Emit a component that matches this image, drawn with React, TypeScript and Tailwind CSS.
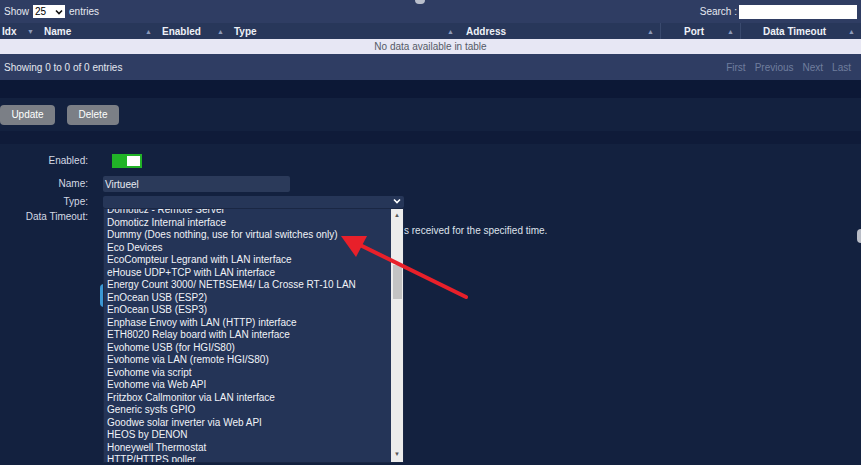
const hardwareTypes = [
  "Domoticz - Remote Server",
  "Domoticz Internal interface",
  "Dummy (Does nothing, use for virtual switches only)",
  "Eco Devices",
  "EcoCompteur Legrand with LAN interface",
  "eHouse UDP+TCP with LAN interface",
  "Energy Count 3000/ NETBSEM4/ La Crosse RT-10 LAN",
  "EnOcean USB (ESP2)",
  "EnOcean USB (ESP3)",
  "Enphase Envoy with LAN (HTTP) interface",
  "ETH8020 Relay board with LAN interface",
  "Evohome USB (for HGI/S80)",
  "Evohome via LAN (remote HGI/S80)",
  "Evohome via script",
  "Evohome via Web API",
  "Fritzbox Callmonitor via LAN interface",
  "Generic sysfs GPIO",
  "Goodwe solar inverter via Web API",
  "HEOS by DENON",
  "Honeywell Thermostat",
  "HTTP/HTTPS poller",
];

const SortIcon = ({ down = false }: any) => (
  <span className="text-[7px] text-[#8d9bbb] leading-none">{down ? "▼" : "▲"}</span>
);

const Chevron = ({ color = "#fff" }: any) => (
  <svg width="8" height="6" viewBox="0 0 8 6">
    <path d="M1 1.5 L4 4.5 L7 1.5" fill="none" stroke={color} strokeWidth="1.6" />
  </svg>
);

const HeaderCell = ({ title, width, pad = "pl-[2px]", center = false, down = false, border = false }: any) => {
  return (
    <div
      className={`${width} h-full flex items-center justify-between pr-[6px] ${
        border ? "border-l border-[#3a4a6e]" : ""
      }`}
    >
      <span className={`${center ? "flex-1 text-center" : pad}`}>{title}</span>
      <SortIcon down={down} />
    </div>
  );
};

const FormRow = ({ label, className = "", children }: any) => {
  return (
    <div className={`flex items-center ${className}`}>
      <div className="w-[88px] text-right text-[10px] leading-[12px] text-[#d4d9e4]">{label}</div>
      {children}
    </div>
  );
};

export default function App() {
  return (
    <div
      className="relative w-[861px] h-[465px] overflow-hidden bg-[#13213f] text-white"
      style={{ fontFamily: '"Liberation Sans", Arial, sans-serif' }}
    >
      {/* table panel */}
      <div className="h-[80px] bg-[#2f3d63] flex flex-col">
        <div className="h-[23px] flex items-center justify-between px-[4px] text-[10px] text-[#e6e9f0]">
          <div className="flex items-center gap-[4px]">
            <span>Show</span>
            <div className="w-[32px] h-[13px] bg-white text-black flex items-center justify-between px-[2px] text-[10px]">
              <span>25</span>
              <Chevron color="#111" />
            </div>
            <span>entries</span>
          </div>
          <div className="flex items-center gap-[2px]">
            <span>Search :</span>
            <div className="w-[118px] h-[14px] bg-white" />
          </div>
        </div>
        <div className="h-[16px] bg-[#28375a] flex items-center text-[10px] font-bold text-[#eef1f7]">
          <HeaderCell title="Idx" width="w-[40px]" down />
          <HeaderCell title="Name" width="w-[118px]" pad="pl-[4px]" />
          <HeaderCell title="Enabled" width="w-[72px]" pad="pl-[4px]" />
          <HeaderCell title="Type" width="w-[230px]" pad="pl-[4px]" />
          <HeaderCell title="Address" width="w-[200px]" pad="pl-[6px]" />
          <HeaderCell title="Port" width="w-[80px]" center border />
          <HeaderCell title="Data Timeout" width="flex-1" center border />
        </div>
        <div className="h-[15px] bg-[#e7e7f4] flex items-center justify-center text-[10px] text-[#555a66]">
          No data available in table
        </div>
        <div className="flex-1 flex items-center justify-between px-[4px] text-[10px]">
          <span className="text-[#e3e7ef]">Showing 0 to 0 of 0 entries</span>
          <div className="flex gap-[9px] pr-[6px] text-[#6f7d9e]">
            <span>First</span>
            <span>Previous</span>
            <span>Next</span>
            <span>Last</span>
          </div>
        </div>
      </div>

      <div className="h-[18px] bg-[#0c1836]" />
      <div className="h-[33px] bg-[#13213f] flex items-center gap-[12px]">
        <button className="w-[55px] h-[20px] rounded-[4px] bg-[#7b7f86] text-[10px] text-white">
          Update
        </button>
        <button className="w-[52px] h-[20px] rounded-[4px] bg-[#7b7f86] text-[10px] text-white">
          Delete
        </button>
      </div>
      <div className="h-[13px] bg-[#0f1b39]" />

      {/* form */}
      <div className="bg-[#13213f] pt-[10px]">
        <FormRow label="Enabled:">
          <div className="ml-[24px] w-[30px] h-[14px] bg-[#21b327] flex items-center justify-end pr-[2px]">
            <div className="w-[13px] h-[10px] bg-white" />
          </div>
        </FormRow>
        <FormRow label="Name:" className="mt-[8px]">
          <div className="ml-[15px] w-[187px] h-[16px] bg-[#2b3a5a] rounded-[2px] flex items-center px-[2px] text-[10px] text-[#e8ebf2]">
            Virtueel
          </div>
        </FormRow>
        <FormRow label="Type:" className="mt-[4px]">
          <div className="ml-[15px] w-[301px] h-[12px] bg-[#263658] rounded-[2px] flex items-start justify-end pr-[3px] pt-[2px]">
            <Chevron />
          </div>
        </FormRow>
        <FormRow label="Data Timeout:" className="mt-[3px]">
          <div className="ml-[15px] w-[301px] h-[12px]" />
        </FormRow>
        <div className="flex mt-[1px] h-[12px] items-center">
          <div className="w-[404px]" />
          <span className="text-[10px] text-[#dfe3ec]">s received for the specified time.</span>
        </div>
        <div className="ml-[100px] mt-[48px] w-[60px] h-[23px] rounded-[4px] bg-[#3b97d3]" />
      </div>

      {/* open dropdown list */}
      <div className="absolute left-[103px] top-[208px] w-[301px] h-[255px] bg-[#243457] border border-[#1a2744] flex overflow-hidden">
        <div className="flex-1 overflow-hidden">
          <div className="-mt-[5px] pl-[3px]">
            {hardwareTypes.map((t) => (
              <div key={t} className="h-[12.5px] leading-[12.5px] text-[10px] text-[#f1f3f8] whitespace-nowrap">
                {t}
              </div>
            ))}
          </div>
        </div>
        <div className="w-[12px] h-full bg-[#ececec] flex flex-col items-center">
          <span className="text-[6px] text-[#555] mt-[3px] leading-none">▲</span>
          <div className="w-[9px] h-[34px] bg-[#c3c3c3] mt-[47px]" />
          <div className="flex-1" />
          <span className="text-[6px] text-[#555] mb-[5px] leading-none">▼</span>
        </div>
      </div>

      {/* small overlays */}
      <div className="absolute left-[415px] -top-[4px] w-[10px] h-[8px] rounded-full bg-[#b9bfcc]" />
      <div className="absolute -right-[4px] top-[229px] w-[8px] h-[14px] rounded-full bg-[#b8bcc6]" />

      {/* red annotation arrow */}
      <svg className="absolute left-0 top-0" width="861" height="465">
        <line x1="466" y1="297" x2="358" y2="244" stroke="#e8202a" strokeWidth="4" strokeLinecap="round" />
        <polygon points="341,236 367,236 356,257" fill="#e8202a" />
      </svg>
    </div>
  );
}
